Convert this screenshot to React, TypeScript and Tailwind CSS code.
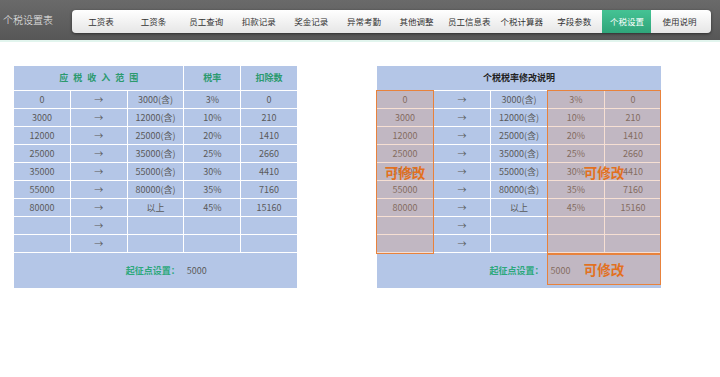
import React from "react";

const tabs = ["工资表", "工资条", "员工查询", "扣款记录", "奖金记录", "异常考勤", "其他调整", "员工信息表", "个税计算器", "字段参数", "个税设置", "使用说明"];

const rows: string[][] = [
  ["0", "→", "3000(含)", "3%", "0"],
  ["3000", "→", "12000(含)", "10%", "210"],
  ["12000", "→", "25000(含)", "20%", "1410"],
  ["25000", "→", "35000(含)", "25%", "2660"],
  ["35000", "→", "55000(含)", "30%", "4410"],
  ["55000", "→", "80000(含)", "35%", "7160"],
  ["80000", "→", "以上", "45%", "15160"],
  ["", "→", "", "", ""],
  ["", "→", "", "", ""],
];

function Header() {
  return (
    <div>
      <div className="h-[40px] bg-gradient-to-b from-[#6a6a6a] to-[#575757] flex items-start">
        <div className="w-[72px] h-[40px] flex items-center pl-[3px] pb-[1px] text-[10px] font-light text-[#ececec]">个税设置表</div>
        <div className="mt-[10px] w-[639px] h-[23px] rounded-[4px] bg-gradient-to-b from-white to-[#e6e6e6] shadow-[0_1px_3px_rgba(0,0,0,0.5)] flex items-stretch gap-[3.6px] pl-[4.5px]">
          {tabs.map((t) => (
            <div
              key={t}
              className={`w-[49px] flex items-center justify-center text-[8.5px] whitespace-nowrap ${
                t === "个税设置" ? "bg-gradient-to-b from-[#45c394] to-[#2fa57a] text-white" : "text-[#333]"
              }`}
            >
              {t}
            </div>
          ))}
        </div>
      </div>
      <div className="h-[2px] bg-[#e2f5ee]" />
    </div>
  );
}

function Cell({ v }: { v: string }) {
  return <div className="bg-[#b4c6e7] flex items-center justify-center text-[9px] text-[#5a5a5a]">{v}</div>;
}

function TaxTable({ right }: { right?: boolean }) {
  return (
    <div className={`relative flex flex-col gap-px ${right ? "w-[284px]" : "w-[283px]"}`}>
      {right ? (
        <div className="h-[24px] bg-[#b4c6e7] flex items-center justify-center text-[9px] font-bold text-[#222]">个税税率修改说明</div>
      ) : (
        <div className="h-[24px] grid grid-cols-5 gap-px text-[9px] font-bold text-[#2b9a6e]">
          <div className="col-span-3 bg-[#b4c6e7] flex items-center justify-center tracking-[5px] pl-[5px]">应税收入范围</div>
          <div className="bg-[#b4c6e7] flex items-center justify-center">税率</div>
          <div className="bg-[#b4c6e7] flex items-center justify-center">扣除数</div>
        </div>
      )}
      {rows.map((r, i) => (
        <div key={i} className="h-[17px] grid grid-cols-5 gap-px">
          {r.map((v, j) => (
            <Cell key={j} v={v} />
          ))}
        </div>
      ))}
      <div className="h-[35px] bg-[#b4c6e7] grid grid-cols-5 items-center text-[9px]">
        <div className="col-span-3 text-right pr-[4px] font-bold text-[#2ca87b]">起征点设置：</div>
        <div className="col-span-2 pl-[3px] text-[#5a5a5a]">5000</div>
      </div>
      {right && (
        <>
          <div className="absolute left-[-1px] top-[24px] w-[58px] h-[164px] border-[1.5px] border-[#e8823c] bg-[rgba(226,150,110,0.3)] flex items-center justify-center">
            <span className="text-[13.5px] font-bold text-[#e2711f]">可修改</span>
          </div>
          <div className="absolute left-[170px] top-[24px] w-[114px] h-[164px] border-[1.5px] border-[#e8823c] bg-[rgba(226,150,110,0.3)] flex items-center justify-center">
            <span className="text-[13.5px] font-bold text-[#e2711f]">可修改</span>
          </div>
          <div className="absolute left-[170px] top-[188px] w-[114px] h-[31px] border-[1.5px] border-[#e8823c] bg-[rgba(226,150,110,0.3)] flex items-center justify-center">
            <span className="text-[13.5px] font-bold text-[#e2711f]">可修改</span>
          </div>
        </>
      )}
    </div>
  );
}

export default function App() {
  return (
    <div className="w-[720px] h-[377px] bg-white overflow-hidden" style={{ fontFamily: '"Noto Sans CJK SC", "Noto Sans", sans-serif' }}>
      <Header />
      <div className="flex pl-[14px] pt-[24px] gap-[80px]">
        <TaxTable />
        <TaxTable right />
      </div>
    </div>
  );
}
